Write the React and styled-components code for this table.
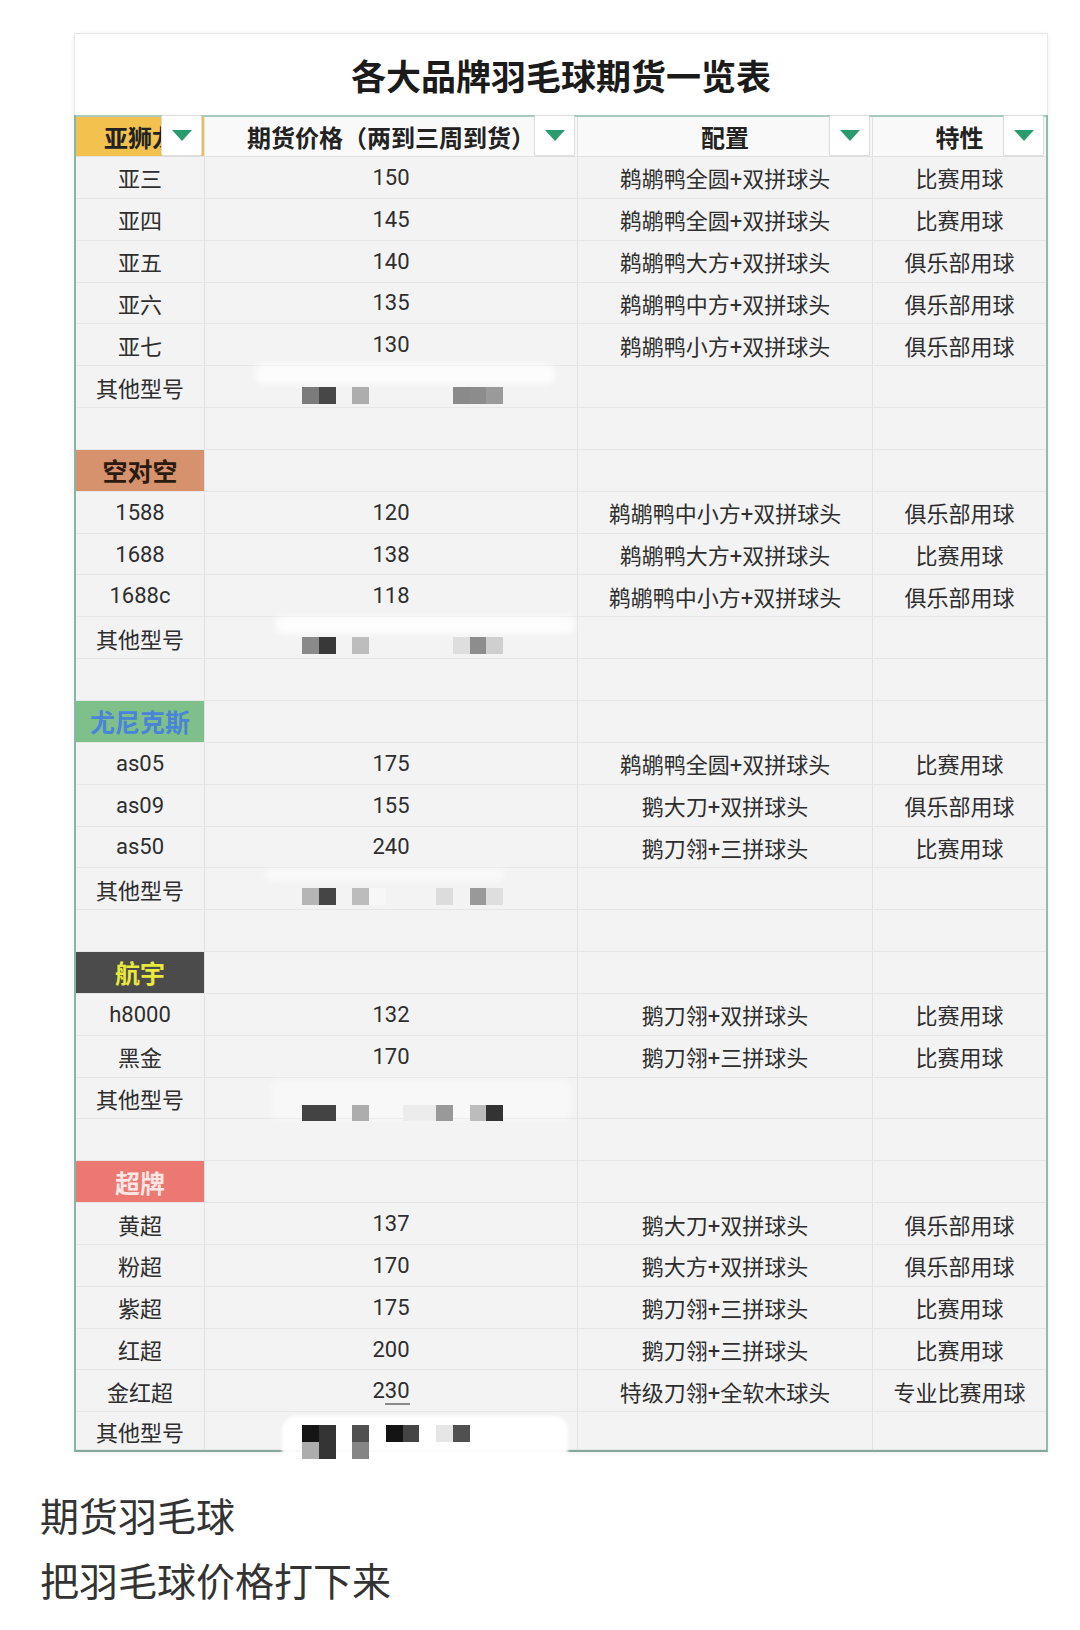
import React from "react";
import styled, { createGlobalStyle } from "styled-components";

const GlobalStyle = createGlobalStyle`
  html, body { margin: 0; padding: 0; background: #ffffff; }
  body { font-family: Roboto, "Noto Sans CJK SC", sans-serif; color: #333; }
  * { box-sizing: border-box; }
`;

const COLS = "129px 373px 295px 173px";
const ROW_H = 41.85;

const Page = styled.div`
  width: 1080px;
  padding-top: 33px;
`;

const Card = styled.div`
  width: 974px;
  margin-left: 74px;
  box-shadow: 0 1px 5px rgba(0, 0, 0, 0.07);
`;

const TitleBar = styled.div`
  height: 82px;
  display: flex;
  align-items: center;
  justify-content: center;
  background: #fff;
  border-top: 1px solid #e6e6e6;
  border-left: 1px solid #e9e9e9;
  border-right: 1px solid #e9e9e9;
  font-family: "Noto Sans CJK SC", sans-serif;
  font-weight: 700;
  font-size: 35px;
  color: #1b1b1b;
`;

const Table = styled.div`
  border-left: 2px solid #88b5a5;
  border-right: 2px solid #8fbcad;
  border-bottom: 2px solid #86a89a;
  background: #f3f3f3;
`;

const Row = styled.div`
  display: grid;
  grid-template-columns: ${COLS};
  height: ${(p) => p.$h}px;
`;

const HeaderRow = styled(Row)`
  border-top: 2px solid #a8cbbd;
`;

const Cell = styled.div`
  position: relative;
  display: flex;
  align-items: center;
  justify-content: center;
  white-space: nowrap;
  border-bottom: 1px solid #e6e6e6;
  border-right: ${(p) => (p.$last ? "none" : "1px solid #e1e1e1")};
  font-size: 22px;
  color: #2e2e2e;
  background: ${(p) => p.$bg || "#f3f3f3"};
`;

const HeadCell = styled(Cell)`
  font-family: "Noto Sans CJK SC", sans-serif;
  font-weight: 700;
  font-size: 24px;
  color: #222;
  background: ${(p) => p.$bg || "#f9f9f9"};
  border-bottom: 1px solid #e2e2e2;
  overflow: visible;
`;

const BrandCell = styled(Cell)`
  font-family: "Noto Sans CJK SC", sans-serif;
  font-weight: 700;
  font-size: 25px;
  color: ${(p) => p.$fg};
`;

const FilterButton = styled.span`
  position: absolute;
  top: -2px;
  right: 2px;
  width: 41px;
  height: 41px;
  display: flex;
  align-items: center;
  justify-content: center;
  background: #ffffff;
  border: 1px solid #dedede;
  border-radius: 2px;
  box-shadow: 0 0 2px rgba(0, 0, 0, 0.08);
`;

const Smear = styled.div`
  position: absolute;
  left: ${(p) => p.$x}px;
  top: ${(p) => p.$y}px;
  width: ${(p) => p.$w}px;
  height: ${(p) => p.$h}px;
  background: rgba(255, 255, 255, ${(p) => p.$o});
  border-radius: ${(p) => p.$r || 8}px;
  filter: blur(${(p) => p.$blur || 3}px);
  z-index: 1;
`;

const Mosaic = styled.div`
  position: absolute;
  left: 97px;
  top: ${(p) => p.$y}px;
  display: grid;
  grid-template-columns: repeat(12, 16.75px);
  grid-auto-rows: 16.75px;
  z-index: 2;
`;

const Block = styled.span`
  grid-column: ${(p) => p.$c + 1};
  grid-row: ${(p) => p.$r + 1};
  background: ${(p) => p.$color};
  filter: blur(0.4px);
`;

const Scribble = styled.span`
  border-bottom: 2px solid #8a8a8a;
  line-height: 1;
`;

const Caption = styled.div`
  margin-left: 40px;
  margin-top: 30px;
  font-family: "Noto Sans CJK SC", sans-serif;
  font-size: 39px;
  line-height: 65px;
  color: #333;
`;

const Triangle = () => (
  <svg width="20" height="11" viewBox="0 0 20 11">
    <polygon points="0,0 20,0 10,11" fill="#2a9b6d" />
  </svg>
);

const mosaics = {
  a: {
    y: 21,
    blocks: [
      [0, 0, "#7b7b7b"], [1, 0, "#474747"], [3, 0, "#adadad"],
      [9, 0, "#8a8a8a"], [10, 0, "#8c8c8c"], [11, 0, "#9a9a9a"],
    ],
    smears: [{ x: 50, y: -2, w: 300, h: 20, o: 0.75 }],
  },
  b: {
    y: 20,
    blocks: [
      [0, 0, "#8a8a8a"], [1, 0, "#383838"], [3, 0, "#bdbdbd"],
      [9, 0, "#dedede"], [10, 0, "#8d8d8d"], [11, 0, "#cfcfcf"],
    ],
    smears: [{ x: 70, y: -1, w: 300, h: 18, o: 0.8 }],
  },
  c: {
    y: 20,
    blocks: [
      [0, 0, "#b5b5b5"], [1, 0, "#454545"], [3, 0, "#bcbcbc"], [4, 0, "#f7f7f7"],
      [8, 0, "#dcdcdc"], [10, 0, "#999999"], [11, 0, "#dedede"],
    ],
    smears: [{ x: 60, y: 0, w: 240, h: 14, o: 0.5 }],
  },
  d: {
    y: 27,
    blocks: [
      [0, 0, "#434343"], [1, 0, "#434343"], [3, 0, "#adadad"],
      [6, 0, "#ececec"], [7, 0, "#ececec"], [8, 0, "#999999"],
      [10, 0, "#bcbcbc"], [11, 0, "#333333"],
    ],
    smears: [{ x: 66, y: 2, w: 300, h: 40, o: 0.45 }],
  },
  e: {
    y: 13,
    blocks: [
      [0, 0, "#151515"], [0, 1, "#adadad"], [1, 0, "#343434"], [1, 1, "#343434"],
      [3, 0, "#505050"], [3, 1, "#858585"], [5, 0, "#141414"], [6, 0, "#454545"],
      [8, 0, "#e6e6e6"], [9, 0, "#505050"],
    ],
    smears: [{ x: 77, y: 4, w: 286, h: 60, o: 0.95, r: 14, blur: 1.5 }],
  },
};

const rows = [
  { t: "d", c: ["亚三", "150", "鹈鹕鸭全圆+双拼球头", "比赛用球"] },
  { t: "d", c: ["亚四", "145", "鹈鹕鸭全圆+双拼球头", "比赛用球"] },
  { t: "d", c: ["亚五", "140", "鹈鹕鸭大方+双拼球头", "俱乐部用球"] },
  { t: "d", c: ["亚六", "135", "鹈鹕鸭中方+双拼球头", "俱乐部用球"] },
  { t: "d", c: ["亚七", "130", "鹈鹕鸭小方+双拼球头", "俱乐部用球"] },
  { t: "o", m: "a" },
  { t: "b" },
  { t: "brand", name: "空对空", bg: "#d5926c", fg: "#2a1a10" },
  { t: "d", c: ["1588", "120", "鹈鹕鸭中小方+双拼球头", "俱乐部用球"] },
  { t: "d", c: ["1688", "138", "鹈鹕鸭大方+双拼球头", "比赛用球"] },
  { t: "d", c: ["1688c", "118", "鹈鹕鸭中小方+双拼球头", "俱乐部用球"] },
  { t: "o", m: "b" },
  { t: "b" },
  { t: "brand", name: "尤尼克斯", bg: "#7fc08a", fg: "#4a84d8" },
  { t: "d", c: ["as05", "175", "鹈鹕鸭全圆+双拼球头", "比赛用球"] },
  { t: "d", c: ["as09", "155", "鹅大刀+双拼球头", "俱乐部用球"] },
  { t: "d", c: ["as50", "240", "鹅刀翎+三拼球头", "比赛用球"] },
  { t: "o", m: "c" },
  { t: "b" },
  { t: "brand", name: "航宇", bg: "#4b4b4b", fg: "#e9e83c" },
  { t: "d", c: ["h8000", "132", "鹅刀翎+双拼球头", "比赛用球"] },
  { t: "d", c: ["黑金", "170", "鹅刀翎+三拼球头", "比赛用球"] },
  { t: "o", m: "d" },
  { t: "b" },
  { t: "brand", name: "超牌", bg: "#ec7872", fg: "#fde6e4" },
  { t: "d", c: ["黄超", "137", "鹅大刀+双拼球头", "俱乐部用球"] },
  { t: "d", c: ["粉超", "170", "鹅大方+双拼球头", "俱乐部用球"] },
  { t: "d", c: ["紫超", "175", "鹅刀翎+三拼球头", "比赛用球"] },
  { t: "d", c: ["红超", "200", "鹅刀翎+三拼球头", "比赛用球"] },
  { t: "d", c: ["金红超", "230", "特级刀翎+全软木球头", "专业比赛用球"], scribble: true },
  { t: "o", m: "e", h: 38 },
];

const headers = [
  { text: "亚狮龙", bg: "#f2c14e" },
  { text: "期货价格（两到三周到货）" },
  { text: "配置" },
  { text: "特性" },
];

function BodyRow({ row }) {
  const h = row.h || ROW_H;
  if (row.t === "d") {
    return (
      <Row $h={h}>
        <Cell>{row.c[0]}</Cell>
        <Cell>
          {row.scribble ? (
            <span>
              2<Scribble>30</Scribble>
            </span>
          ) : (
            row.c[1]
          )}
        </Cell>
        <Cell>{row.c[2]}</Cell>
        <Cell $last>{row.c[3]}</Cell>
      </Row>
    );
  }
  if (row.t === "brand") {
    return (
      <Row $h={h}>
        <BrandCell $bg={row.bg} $fg={row.fg}>{row.name}</BrandCell>
        <Cell />
        <Cell />
        <Cell $last />
      </Row>
    );
  }
  if (row.t === "o") {
    const m = mosaics[row.m];
    return (
      <Row $h={h}>
        <Cell>其他型号</Cell>
        <Cell>
          {m.smears.map((s, i) => (
            <Smear key={i} $x={s.x} $y={s.y} $w={s.w} $h={s.h} $o={s.o} $r={s.r} $blur={s.blur} />
          ))}
          <Mosaic $y={m.y}>
            {m.blocks.map(([c, r, color], i) => (
              <Block key={i} $c={c} $r={r} $color={color} />
            ))}
          </Mosaic>
        </Cell>
        <Cell />
        <Cell $last />
      </Row>
    );
  }
  return (
    <Row $h={h}>
      <Cell />
      <Cell />
      <Cell />
      <Cell $last />
    </Row>
  );
}

export default function App() {
  return (
    <>
      <GlobalStyle />
      <Page>
        <Card>
          <TitleBar>各大品牌羽毛球期货一览表</TitleBar>
          <Table>
            <HeaderRow $h={42}>
              {headers.map((hd, i) => (
                <HeadCell key={i} $bg={hd.bg} $last={i === headers.length - 1}>
                  {hd.text}
                  <FilterButton>
                    <Triangle />
                  </FilterButton>
                </HeadCell>
              ))}
            </HeaderRow>
            {rows.map((r, i) => (
              <BodyRow key={i} row={r} />
            ))}
          </Table>
        </Card>
        <Caption>
          期货羽毛球
          <br />
          把羽毛球价格打下来
        </Caption>
      </Page>
    </>
  );
}
